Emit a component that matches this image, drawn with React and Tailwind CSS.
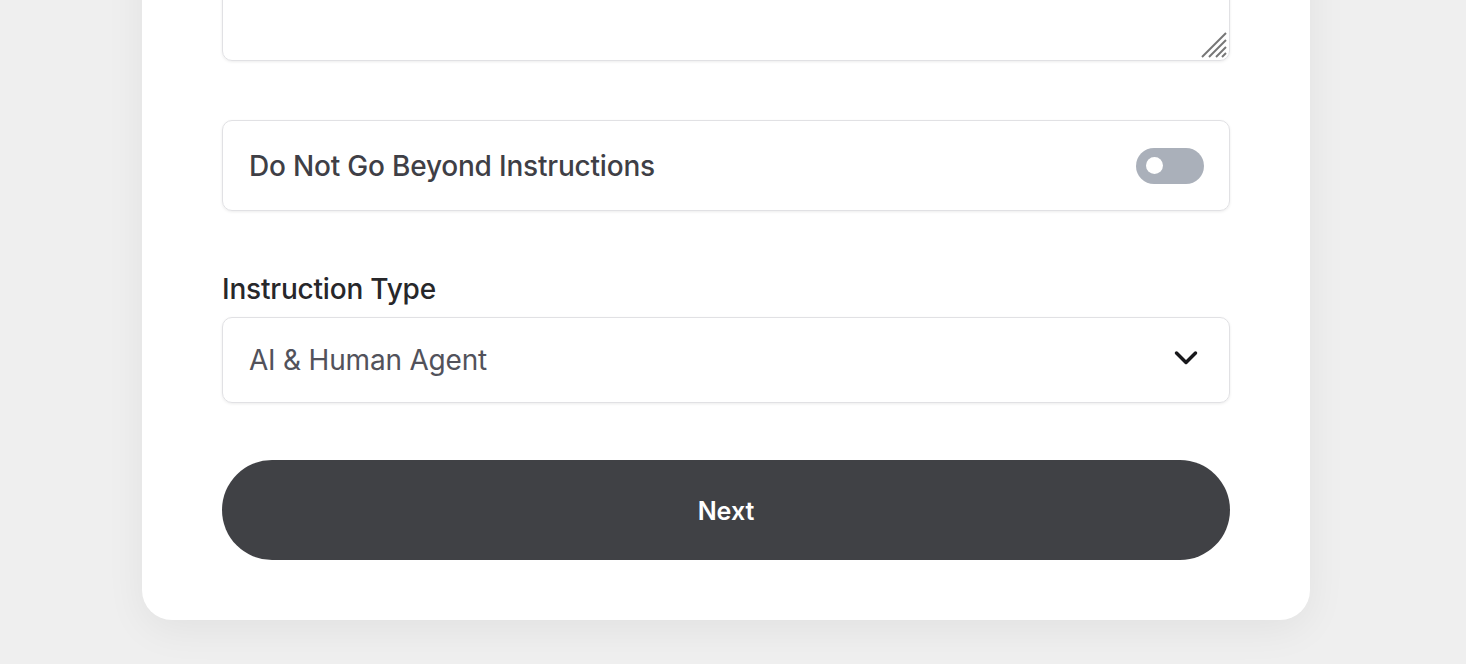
import React, { useState } from 'react'

const FONT = { fontFamily: 'Inter, "Noto Sans", sans-serif' }

export default function App() {
  const [strict, setStrict] = useState(false)
  const [type] = useState('AI & Human Agent')

  return (
    <div
      className="h-screen w-full overflow-hidden bg-[#efefef] flex flex-col justify-end pb-[44px]"
      style={FONT}
    >
      <div className="ml-[142px] w-[1168px] bg-white rounded-[30px] shadow-[0_10px_40px_rgba(0,0,0,0.06)] px-[80px] pb-[60px] pt-[40px] flex flex-col">
        {/* Instructions text */}
        <div className="relative">
          <textarea
            className="block w-full h-[200px] rounded-[10px] border border-[#e1e1e4] shadow-[0_1px_3px_rgba(0,0,0,0.08)] px-[26px] py-[20px] text-[26px] text-[#3f3f46] outline-none resize-none"
            defaultValue=""
          />
          <svg className="absolute right-[3px] bottom-[3px]" width="26" height="26" viewBox="0 0 26 26">
            <g stroke="#767676" strokeWidth="2" strokeLinecap="butt">
              <line x1="1" y1="25" x2="25" y2="1" />
              <line x1="8" y1="25" x2="25" y2="8" />
              <line x1="15" y1="25" x2="25" y2="15" />
              <line x1="21" y1="25" x2="25" y2="21" />
            </g>
          </svg>
        </div>

        {/* Toggle */}
        <div className="mt-[59px] h-[91px] rounded-[10px] border border-[#e1e1e4] shadow-[0_1px_3px_rgba(0,0,0,0.08)] flex items-center justify-between pl-[26px] pr-[25px]">
          <span className="text-[28px] font-medium text-[#3f3f46] tracking-[-0.2px]">
            Do Not Go Beyond Instructions
          </span>
          <button
            onClick={() => setStrict(v => !v)}
            className={`w-[68px] h-[36px] rounded-full flex items-center px-[10px] ${
              strict ? 'bg-[#404145] justify-end' : 'bg-[#aab0ba] justify-start'
            }`}
          >
            <span className="w-[17px] h-[17px] rounded-full bg-white" />
          </button>
        </div>

        {/* Instruction type */}
        <label className="mt-[60px] text-[28px] font-medium text-[#27272a] leading-[36px] tracking-[-0.2px]">
          Instruction Type
        </label>
        <div className="mt-[10px] h-[86px] rounded-[10px] border border-[#e1e1e4] shadow-[0_1px_3px_rgba(0,0,0,0.08)] flex items-center pl-[26px] pr-[31px]">
          <span className="flex-1 text-[28px] text-[#52525b] tracking-[-0.2px]">{type}</span>
          <svg width="24" height="16" viewBox="0 0 24 16" className="-mt-[4px]">
            <polyline points="2.5,3 12,12.5 21.5,3" fill="none" stroke="#18181b" strokeWidth="3.5" strokeLinecap="round" strokeLinejoin="round" />
          </svg>
        </div>

        {/* Next */}
        <button className="mt-[57px] h-[100px] w-full rounded-full bg-[#404145] text-white text-[25px] font-semibold pt-[4px]">
          Next
        </button>
      </div>
    </div>
  )
}
